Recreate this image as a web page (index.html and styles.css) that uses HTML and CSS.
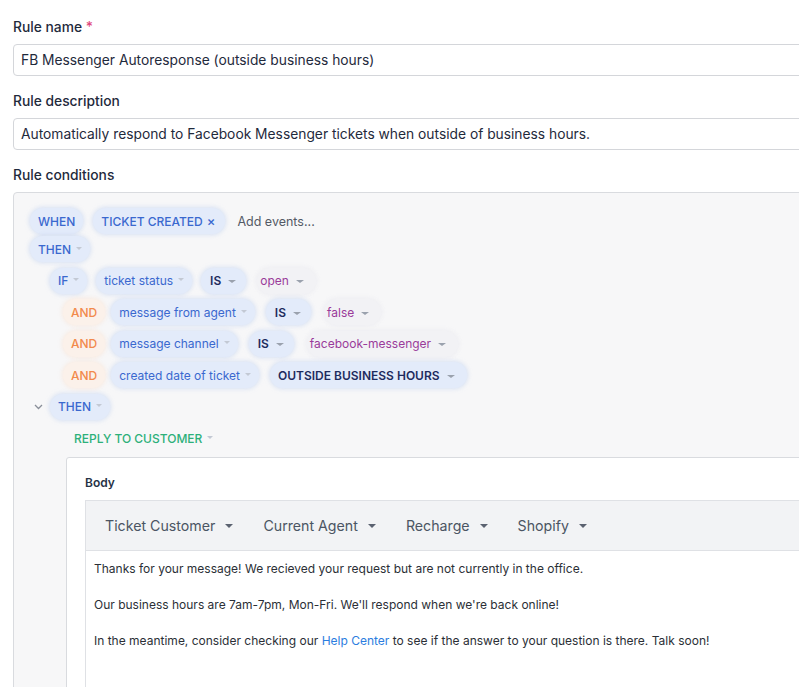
FILE: index.html
```html
<!DOCTYPE html>
<html>
<head>
<meta charset="utf-8">
<link rel="stylesheet" href="styles.css">
</head>
<body>
<div class="page">
  <div class="field">
    <div class="label">Rule name <span class="req">*</span></div>
    <div class="input">FB Messenger Autoresponse (outside business hours)</div>
  </div>
  <div class="field">
    <div class="label">Rule description</div>
    <div class="input">Automatically respond to Facebook Messenger tickets when outside of business hours.</div>
  </div>
  <div class="label">Rule conditions</div>
  <div class="conditions">
    <div class="row">
      <span class="pill up">WHEN</span>
      <span class="pill up ev">TICKET CREATED <span class="x">×</span></span>
      <span class="add">Add events...</span>
    </div>
    <div class="row r-then">
      <span class="pill up">THEN<i class="caret"></i></span>
    </div>
    <div class="row ind-if">
      <span class="pill up">IF<i class="caret"></i></span>
      <span class="pill">ticket status<i class="caret"></i></span>
      <span class="pill op">IS<i class="caret dk"></i></span>
      <span class="pill val">open<i class="caret dk"></i></span>
    </div>
    <div class="row ind-and">
      <span class="pill and">AND</span>
      <span class="pill">message from agent<i class="caret"></i></span>
      <span class="pill op">IS<i class="caret dk"></i></span>
      <span class="pill val">false<i class="caret dk"></i></span>
    </div>
    <div class="row ind-and">
      <span class="pill and">AND</span>
      <span class="pill">message channel<i class="caret"></i></span>
      <span class="pill op">IS<i class="caret dk"></i></span>
      <span class="pill val">facebook-messenger<i class="caret dk"></i></span>
    </div>
    <div class="row ind-and">
      <span class="pill and">AND</span>
      <span class="pill">created date of ticket<i class="caret"></i></span>
      <span class="pill op big">OUTSIDE BUSINESS HOURS<i class="caret dk"></i></span>
    </div>
    <div class="row ind-then2">
      <svg class="chev" width="9" height="6" viewBox="0 0 9 6"><path d="M1 1l3.5 3.5L8 1" fill="none" stroke="#8a8f99" stroke-width="1.3"/></svg>
      <span class="pill up">THEN<i class="caret"></i></span>
    </div>
    <div class="row ind-reply">
      <span class="action">REPLY TO CUSTOMER<i class="caret"></i></span>
    </div>
    <div class="card">
      <div class="body-label">Body</div>
      <div class="editor">
        <div class="toolbar">
          <span class="tool">Ticket Customer<i class="tcaret"></i></span>
          <span class="tool">Current Agent<i class="tcaret"></i></span>
          <span class="tool">Recharge<i class="tcaret"></i></span>
          <span class="tool">Shopify<i class="tcaret"></i></span>
        </div>
        <div class="content">
          <p>Thanks for your message! We recieved your request but are not currently in the office.</p>
          <p>Our business hours are 7am-7pm, Mon-Fri. We'll respond when we're back online!</p>
          <p>In the meantime, consider checking our <a class="link">Help Center</a> to see if the answer to your question is there. Talk soon!</p>
        </div>
      </div>
    </div>
  </div>
</div>
</body>
</html>
```

FILE: styles.css
```css
html, body {
  margin: 0;
  padding: 0;
  overflow: hidden;
  background: #ffffff;
}
body {
  font-family: Inter, "Noto Sans", sans-serif;
  color: #1f2937;
}
.page {
  width: 900px;
  padding: 17px 0 0 13px;
}
.label {
  font-size: 13.8px;
  line-height: 20px;
  font-weight: 500;
  color: #1f2a3c;
  margin-bottom: 7px;
}
.req {
  color: #e0457b;
}
.field {
  margin-bottom: 15px;
}
.input {
  box-sizing: border-box;
  height: 32px;
  border: 1px solid #d4d6da;
  border-radius: 4px;
  padding: 0 7px;
  font-size: 13.8px;
  line-height: 30px;
  color: #1f2a3c;
  white-space: nowrap;
}
.conditions {
  box-sizing: border-box;
  height: 600px;
  background: #f7f7f8;
  border: 1px solid #d9dbdf;
  border-radius: 4px;
  padding: 15px 0 0 16px;
  display: flex;
  flex-direction: column;
  gap: 5.5px;
}
.row {
  flex: none;
  display: flex;
  align-items: center;
  height: 26px;
  gap: 10px;
}
.r-then {
  margin-top: -3.5px;
}
.ind-if { padding-left: 20px; gap: 9px; }
.ind-and { padding-left: 33px; gap: 11px; }
.ind-then2 { padding-left: 4px; gap: 5px; }
.ind-reply { padding-left: 44px; }
.pill {
  display: inline-flex;
  align-items: center;
  height: 26px;
  padding: 0 8px;
  border-radius: 13px;
  background: #e3ebfa;
  box-shadow: 0 0 4px 1px rgba(190, 208, 240, 0.55);
  color: #3a68cf;
  font-size: 12px;
  white-space: nowrap;
}
.pill.up {
  font-size: 12px;
  font-weight: 500;
}
.pill.ev {
  padding-right: 10px;
}
.x {
  margin-left: 4px;
  font-size: 13px;
}
.add {
  font-size: 12.5px;
  color: #545a66;
  margin-left: 2px;
}
.pill.op {
  color: #1e2b5e;
  font-weight: 600;
  font-size: 12px;
  padding: 0 10px 0 9px;
}
.pill.op.big {
  padding: 0 12px 0 8px;
}
.pill.val {
  background: #f2f2f5;
  box-shadow: 0 0 4px 1px rgba(235, 235, 240, 0.8);
  color: #9a3b9a;
  padding: 0 12px 0 3px;
  margin-left: 2px;
}
.pill.and {
  background: #fbf1ea;
  box-shadow: 0 0 4px 1px rgba(250, 230, 215, 0.7);
  color: #f28a4c;
  font-weight: 500;
  font-size: 12px;
  padding: 0 8px;
  margin-right: -5px;
}
.caret {
  display: inline-block;
  width: 0;
  height: 0;
  border-left: 3px solid transparent;
  border-right: 3px solid transparent;
  border-top: 3px solid #c3c9d4;
  margin-left: 5px;
  margin-top: -2px;
}
.caret.dk {
  border-top-color: #9aa1ad;
  margin-left: 7px;
  margin-top: 2px;
  border-left-width: 4px;
  border-right-width: 4px;
}
.chev {
  display: block;
  margin-right: 2px;
}
.action {
  display: inline-flex;
  align-items: center;
  color: #2db07a;
  font-size: 12px;
  font-weight: 500;
}
.card {
  flex: none;
  margin: 0.5px 0 0 36px;
  background: #ffffff;
  border: 1px solid #d9dbdf;
  border-radius: 3px;
  padding: 17px 0 0 18px;
  height: 400px;
}
.body-label {
  font-size: 12px;
  line-height: 16px;
  font-weight: 600;
  color: #263245;
  margin-bottom: 9px;
}
.editor {
  border: 1px solid #dfe1e5;
  border-right: none;
  height: 400px;
}
.toolbar {
  box-sizing: border-box;
  height: 50px;
  background: #f2f3f5;
  border-bottom: 1px solid #dfe1e5;
  display: flex;
  align-items: center;
  padding-left: 19px;
  gap: 30px;
}
.tool {
  display: inline-flex;
  align-items: center;
  font-size: 14.2px;
  color: #4b5563;
}
.tcaret {
  display: inline-block;
  width: 0;
  height: 0;
  border-left: 4px solid transparent;
  border-right: 4px solid transparent;
  border-top: 4px solid #5b6270;
  margin-left: 10px;
}
.content {
  padding: 9px 0 0 8px;
  font-size: 12px;
  line-height: 18px;
  color: #2b2f36;
}
.content p {
  margin: 0 0 18px 0;
}
.link {
  color: #2b7de0;
}
```
